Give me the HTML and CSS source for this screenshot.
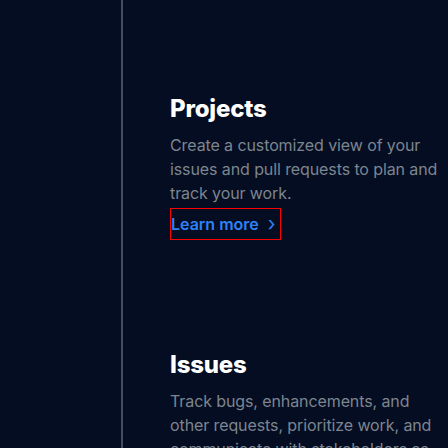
FILE: index.html
```html
<!DOCTYPE html>
<html lang="en">
<head>
<meta charset="utf-8">
<title>Features</title>
<link rel="stylesheet" href="styles.css">
</head>
<body>
<div class="page">
  <div class="rail"></div>
  <main class="content">
    <section class="feature">
      <h2 class="feature-title">Projects</h2>
      <p class="feature-text">Create a customized view of your issues and pull requests to plan and track your work.</p>
      <a class="feature-link" href="#">Learn more <span class="chev">&#x203A;</span></a>
    </section>
    <section class="feature">
      <h2 class="feature-title">Issues</h2>
      <p class="feature-text">Track bugs, enhancements, and other requests, prioritize work, and communicate with stakeholders as changes are proposed.</p>
    </section>
  </main>
</div>
</body>
</html>
```
FILE: styles.css
```css
html, body {
  margin: 0;
  padding: 0;
  height: 100%;
  overflow: hidden;
  background: #040d21;
}
body {
  font-family: Inter, "Noto Sans", sans-serif;
}
.page {
  display: flex;
  height: 448px;
}
.rail {
  width: 121px;
  flex: none;
  border-right: 2px solid #444d68;
}
.content {
  flex: 1;
  padding-left: 47px;
  padding-top: 93px;
}
.feature-title {
  margin: 0;
  font-size: 24px;
  line-height: 32px;
  font-weight: 800;
  color: #ffffff;
  letter-spacing: -0.2px;
}
.feature-text {
  margin: 8px 0 0;
  font-size: 16px;
  line-height: 24px;
  color: #7d8590;
  letter-spacing: -0.1px;
}
.feature-link {
  display: inline-flex;
  align-items: center;
  gap: 9px;
  margin-top: 3px;
  height: 30px;
  padding-right: 5px;
  border: 1px solid #ff0000;
  color: #2f81f7;
  font-size: 16px;
  font-weight: 600;
  text-decoration: none;
}
.chev {
  font-size: 20px;
  line-height: 1;
  font-weight: 400;
}
.feature + .feature {
  margin-top: 109px;
}
```
